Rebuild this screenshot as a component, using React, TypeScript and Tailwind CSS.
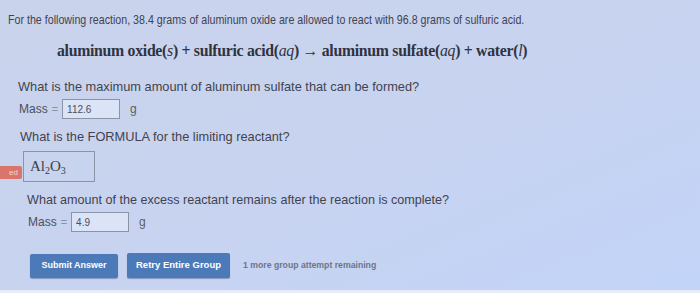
import React from "react";

const sans = { fontFamily: '"Liberation Sans", Arial, sans-serif' };
const serif = { fontFamily: '"Liberation Serif", "Times New Roman", serif' };

function MassRow({ value, className }: { value: string; className: string }) {
  return (
    <div className={`flex items-center ${className}`}>
      <span className="text-[12px] text-[#4b4f5c]">Mass</span>
      <span className="ml-[4px] text-[11px] text-[#8a90a0]">=</span>
      <div className="ml-[4px] w-[58px] h-[20px] border border-[#8c93a6] bg-[#dbe3f6] flex items-center pl-[4px] text-[10px] text-[#4b4f5c]">
        {value}
      </div>
      <span className="ml-[10px] text-[12px] text-[#5a5f6c]">g</span>
    </div>
  );
}

export default function App(): React.ReactElement {
  return (
    <div
      className="w-[700px] h-[293px] overflow-hidden bg-gradient-to-br from-[#cad3ec] via-[#c8d3f0] to-[#c2d4f8] relative"
      style={sans}
    >
      <div className="pt-[11px] pl-[8px] text-[13.5px] leading-[18px] text-[#3f4350] whitespace-nowrap">
        <span className="inline-block origin-left scale-x-[0.79]">
          For the following reaction, 38.4 grams of aluminum oxide are allowed to react with 96.8 grams of sulfuric acid.
        </span>
      </div>

      <div className="pt-[12px] pl-[57px] text-[15.8px] leading-[20px] text-[#2f3340] font-semibold tracking-[-0.3px]" style={serif}>
        aluminum oxide(<i className="font-normal">s</i>) + sulfuric acid(<i className="font-normal">aq</i>) → aluminum sulfate(<i className="font-normal">aq</i>) + water(<i className="font-normal">l</i>)
      </div>

      <div className="pt-[18px] pl-[18px] text-[12.8px] leading-[16px] text-[#3f4350]">
        What is the maximum amount of aluminum sulfate that can be formed?
      </div>

      <MassRow value="112.6" className="pt-[4px] pl-[19px]" />

      <div className="pt-[10px] pl-[20px] text-[12.8px] leading-[16px] text-[#3f4350]">
        What is the FORMULA for the limiting reactant?
      </div>

      <div className="pt-[6px] flex items-start">
        <div className="w-[22px] h-[13px] mt-[15px] bg-[#d9756a] text-[8px] text-[#f6d8d4] flex items-center justify-end pr-[4px] rounded-r-[2px]">
          ed
        </div>
        <div className="ml-[1px] w-[72px] h-[31px] border border-[#8c93a6] flex items-center pl-[6px] text-[15px] text-[#3a3e4a]" style={serif}>
          Al<sub className="text-[10px] bottom-[-0.4em]">2</sub>O<sub className="text-[10px] bottom-[-0.4em]">3</sub>
        </div>
      </div>

      <div className="pt-[10px] pl-[27px] text-[12.6px] leading-[16px] text-[#3f4350]">
        What amount of the excess reactant remains after the reaction is complete?
      </div>

      <MassRow value="4.9" className="pt-[4px] pl-[28px]" />

      <div className="pt-[21px] pl-[30px] flex items-center">
        <button className="w-[88px] h-[24px] bg-[#4c79b7] rounded-[2px] text-white text-[9px] font-bold shadow-[0_1px_1px_rgba(40,60,100,0.4)]">
          Submit Answer
        </button>
        <button className="ml-[9px] w-[103px] h-[25px] bg-[#4c79b7] rounded-[2px] text-white text-[9.5px] font-bold shadow-[0_1px_1px_rgba(40,60,100,0.4)]">
          Retry Entire Group
        </button>
        <span className="ml-[13px] text-[8.7px] font-bold text-[#6e7488]">1 more group attempt remaining</span>
      </div>

      <div className="absolute left-0 right-0 bottom-0 h-[3px] bg-[#e8ecf6]" />
    </div>
  );
}
